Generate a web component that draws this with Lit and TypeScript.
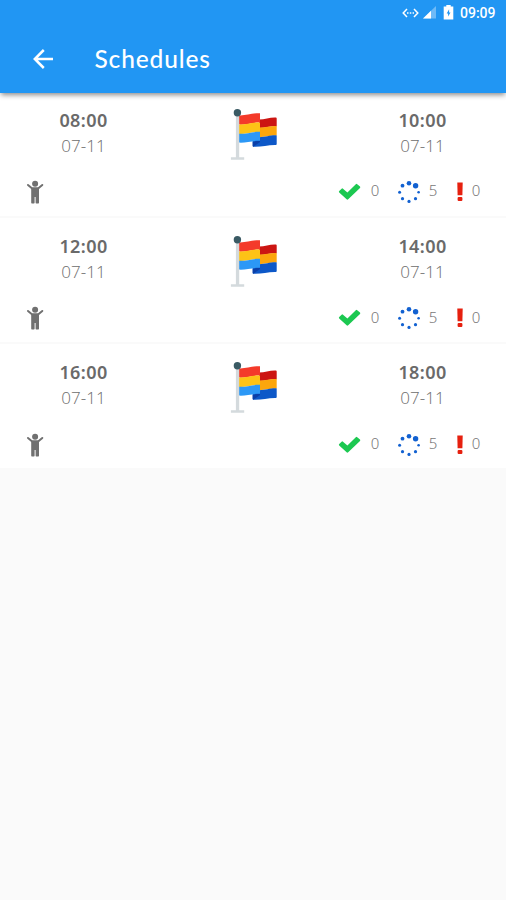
import { LitElement, html, css, svg } from "lit";
import { customElement, property } from "lit/decorators.js";

interface Schedule {
  start: string;
  end: string;
  date: string;
  done: number;
  pending: number;
  missed: number;
}

const schedules: Schedule[] = [
  { start: "08:00", end: "10:00", date: "07-11", done: 0, pending: 5, missed: 0 },
  { start: "12:00", end: "14:00", date: "07-11", done: 0, pending: 5, missed: 0 },
  { start: "16:00", end: "18:00", date: "07-11", done: 0, pending: 5, missed: 0 },
];

// Spinner dots: x, y, radius
const dots = [
  [12, 3.2, 2.3],
  [18.6, 5.7, 2.7],
  [21.6, 12.2, 1.3],
  [18.5, 18.7, 1.6],
  [12, 21.4, 1.6],
  [5.5, 18.7, 1.6],
  [2.6, 12.2, 1.5],
  [5.5, 5.7, 1.9],
];

const flagIcon = html`<svg width="50" height="56" viewBox="0 0 50 56">
  <path fill="#cc1512" d="M30 12.6C36 12.6 41 10.2 46.8 10.5Q47.7 10.6 47.7 11.6V19.3C41 19 37 21 30 21Z" />
  <path fill="#fca60c" d="M30 20.6C37 20.8 41 18.8 47.7 19.1V28.6C41 28.4 36 30.2 30 30.2Z" />
  <path fill="#0d58c8" d="M23.7 30.2H30C37 30.2 41 28.1 47.7 28.4V37Q47.7 37.9 46.8 38C39 37.8 32 40.2 24.6 39.8Q23.7 39.7 23.7 38.8Z" />
  <path fill="#0a3fa8" d="M23.7 34.6L31 33.4V35L24.4 39.7Q23.7 39.6 23.7 38.8Z" />
  <path fill="#f43a2a" d="M10 8.4C17 8.8 23 6 31 6.2V15.6C23 15.4 17 18 10 17.6Z" />
  <path fill="#fdc316" d="M10 17.4C17 17.8 23 15.2 31 15.4V25C23 24.8 17 27.4 10 27Z" />
  <path fill="#2c98f6" d="M10 26.8C17 27.2 23 24.6 31 24.8V33.8C23 33.6 17 36 10 35.6Z" />
  <path fill="#d4dadd" d="M6.9 8H10.2V50.2H15.2V52.8H1.9V50.2H6.9Z" />
  <circle cx="8.4" cy="5.8" r="3.7" fill="#3a5a64" />
</svg>`;

const personIcon = html`<svg width="18" height="24" viewBox="0 0 18 24">
  <circle cx="9.1" cy="3.7" r="3" fill="#707070" />
  <path
    fill="none" stroke="#707070" stroke-width="2" stroke-linecap="round" stroke-linejoin="round"
    d="M2 5L6.2 8.5H12.1L16.3 5"
  />
  <path fill="#707070" d="M5.2 7.5H13V22.8Q13 23.5 12.3 23.5H10.3Q9.6 23.5 9.6 22.8V17H8.6V22.8Q8.6 23.5 7.9 23.5H5.9Q5.2 23.5 5.2 22.8Z" />
</svg>`;

const checkIcon = html`<svg width="24" height="20" viewBox="0 0 24 20">
  <path
    fill="#1cc851"
    d="M1.2 9L3.6 6.7Q4.3 6 5 6.7L9.4 10.5L17.8 2.2Q18.5 1.5 19.2 2.2L22 4.6Q22.6 5.3 22 6L10.2 17.3Q9.4 18 8.6 17.3L1.2 10.5Q.5 9.8 1.2 9Z"
  />
</svg>`;

const spinnerIcon = html`<svg width="24" height="24" viewBox="0 0 24 24">
  ${dots.map(([x, y, r]) => svg`<circle cx=${x} cy=${y} r=${r} fill="#1261d1" />`)}
</svg>`;

const alertIcon = html`<svg width="8" height="20" viewBox="0 0 8 20">
  <path fill="#e6200f" d="M1.3 .6H6.7L6.4 13.2H1.6Z" />
  <rect x="1.6" y="15" width="4.8" height="4" rx="1" fill="#e6200f" />
</svg>`;

@customElement("schedule-row")
export class ScheduleRow extends LitElement {
  @property({ attribute: false }) item!: Schedule;

  static styles = css`
    :host {
      display: flex;
      flex-direction: column;
      box-sizing: border-box;
      height: 124px;
      padding-top: 15px;
      background: #fff;
      color: #777;
      font-family: "Noto Sans", "Open Sans", sans-serif;
    }
    svg { display: block; flex: none; }
    .top {
      display: grid;
      grid-template-columns: 167px 1fr 167px;
      height: 57px;
    }
    .slot { text-align: center; white-space: nowrap; }
    .time {
      font-size: 18px;
      font-weight: 600;
      line-height: 26px;
      color: #6a6a6a;
      letter-spacing: 0.4px;
    }
    .date {
      font-family: "Open Sans", sans-serif;
      font-size: 17px;
      font-weight: 300;
      line-height: 26px;
      color: #6c6c6c;
    }
    .flag { padding: 0.5px 0 0 62px; }
    .bottom {
      display: flex;
      align-items: center;
      height: 52px;
      padding: 4.5px 25px 0 26px;
      box-sizing: border-box;
    }
    .counts { display: flex; align-items: center; margin-left: auto; }
    .num {
      font-size: 15px;
      font-weight: 300;
      line-height: 20px;
      width: 10px;
      text-align: center;
      margin-top: -3px;
    }
    .check { margin-right: 8px; }
    .spin { margin: 0 7.5px 0 16.5px; }
    .alert { margin: 0 7.5px 0 17.5px; }
  `;

  render() {
    const { start, end, date, done, pending, missed } = this.item;
    return html`
      <div class="top">
        <div class="slot"><div class="time">${start}</div><div class="date">${date}</div></div>
        <div class="flag">${flagIcon}</div>
        <div class="slot"><div class="time">${end}</div><div class="date">${date}</div></div>
      </div>
      <div class="bottom">
        ${personIcon}
        <div class="counts">
          <span class="check">${checkIcon}</span><span class="num">${done}</span>
          <span class="spin">${spinnerIcon}</span><span class="num">${pending}</span>
          <span class="alert">${alertIcon}</span><span class="num">${missed}</span>
        </div>
      </div>
    `;
  }
}

@customElement("app-root")
export class AppRoot extends LitElement {
  static styles = css`
    :host {
      display: flex;
      flex-direction: column;
      height: 900px;
      background: #fafafa;
      overflow: hidden;
    }
    svg { display: block; flex: none; }
    .header {
      flex: none;
      height: 93px;
      background: #2196f3;
      color: #fff;
      box-shadow: 0 3px 5px -1px rgba(0, 0, 0, 0.45);
      z-index: 1;
    }
    .status {
      display: flex;
      justify-content: flex-end;
      align-items: center;
      height: 25px;
      padding-right: 10.5px;
      font: 500 14px/25px Roboto, sans-serif;
    }
    .time { padding-top: 1px; }
    .battery { margin: 0 6px 0 7px; }
    .signal { margin-left: 4px; }
    .bar {
      display: flex;
      align-items: center;
      height: 68px;
      padding-left: 32px;
    }
    .title {
      margin: -1px 0 0 40.5px;
      font: 500 24.5px/32px Lato, sans-serif;
      letter-spacing: 0.85px;
    }
    .list {
      display: flex;
      flex-direction: column;
      gap: 2.3px;
      margin-top: -1.3px;
    }
  `;

  render() {
    return html`
      <header class="header">
        <div class="status">
          <svg width="17" height="12" viewBox="0 0 17 12">
            <path d="M5 2L1.2 6L5 10M12 2L15.8 6L12 10" fill="none" stroke="#fff" stroke-width="1.5" />
            <path d="M5 6H6.5M7.8 6H9.3M10.6 6H12" stroke="#fff" stroke-width="1.6" />
          </svg>
          <svg class="signal" width="13" height="13" viewBox="0 0 13 13">
            <path d="M0 12.5L13 0V12.5Z" fill="#fff" opacity=".35" />
            <path d="M0 12.5L8 4.8V12.5Z" fill="#fff" />
          </svg>
          <svg class="battery" width="11" height="15" viewBox="0 0 11 15">
            <path d="M3.3 0H7.7V1.6H10.3V14.6H.7V1.6H3.3Z" fill="#fff" />
            <path d="M6.1 4.3L3.7 8.5H5.1V11.6L7.5 7.4H6.1Z" fill="#2196f3" />
          </svg>
          <span class="time">09:09</span>
        </div>
        <div class="bar">
          <svg width="22" height="22" viewBox="0 0 22 22">
            <path d="M21 11H3M11.8 2L2.8 11L11.8 20" fill="none" stroke="#fff" stroke-width="2.5" />
          </svg>
          <h1 class="title">Schedules</h1>
        </div>
      </header>
      <main class="list">
        ${schedules.map((s) => html`<schedule-row .item=${s}></schedule-row>`)}
      </main>
    `;
  }
}
